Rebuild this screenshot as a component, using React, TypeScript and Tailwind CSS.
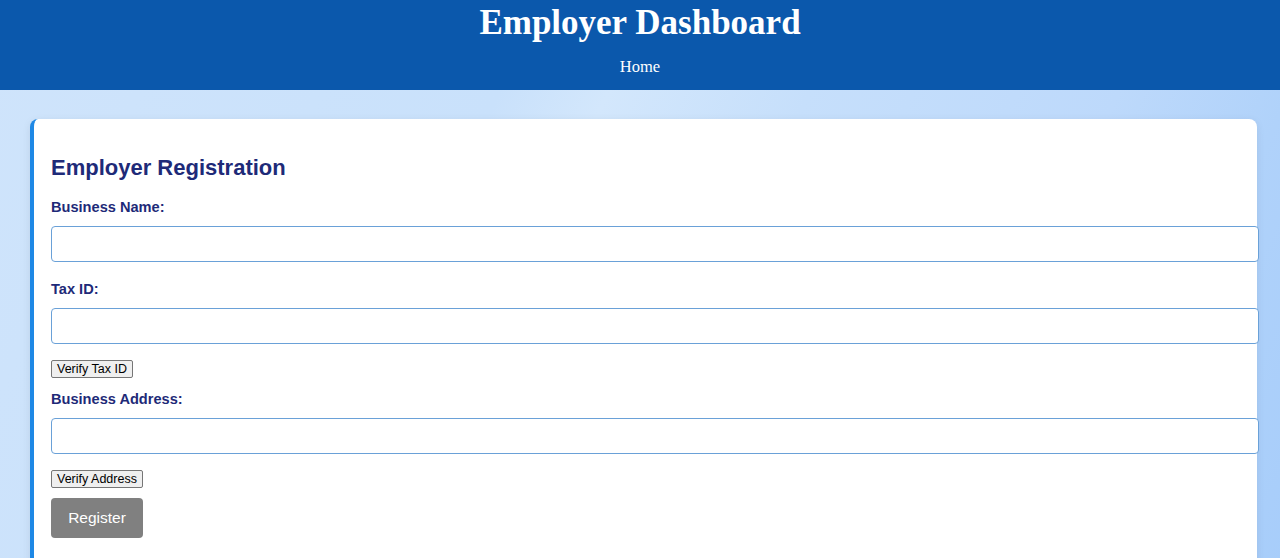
export default function App() {
  const fields = [
    { label: "Business Name:", verify: null, gap: "mt-[17px]" },
    { label: "Tax ID:", verify: "Verify Tax ID", gap: "mt-[18px]" },
    { label: "Business Address:", verify: "Verify Address", gap: "mt-[12px]" },
  ];

  return (
    <div className="min-h-[558px] overflow-hidden bg-[linear-gradient(115deg,#cfe4fb_0%,#c9e1fb_35%,#d3e7fc_42%,#c6dffb_55%,#bdd9fb_75%,#b0d2fa_86%,#a7cdfa_100%)] font-['Liberation_Sans',Arial,sans-serif]">
      <header className="h-[90px] bg-[#0b58ac] text-center text-white">
        <h1 className="pt-[3px] font-['Liberation_Serif',Georgia,serif] text-[35px] font-bold leading-[40px]">
          Employer Dashboard
        </h1>
        <nav className="mt-[14px] font-['Liberation_Serif',Georgia,serif] text-[16.5px] leading-[20px]">
          <a href="#">Home</a>
        </nav>
      </header>

      <main className="px-[30px] pt-[29px]">
        <div className="w-[1227px] rounded-lg border-l-4 border-[#1e88e5] bg-white pb-[40px] pl-[17px] pr-[18px] pt-[36px] shadow-[0_2px_8px_rgba(0,0,0,0.08)]">
          <h2 className="text-[22px] font-bold leading-[26px] text-[#1e2a78]">Employer Registration</h2>

          {fields.map((f, i) => (
            <div key={i} className={f.gap}>
              <label className="block text-[14.6px] font-bold leading-[18px] text-[#1e2a78]">{f.label}</label>
              <input
                type="text"
                className="mt-[10px] block h-[36px] w-[1208px] rounded-[4px] border border-[#6aa1d8] bg-white px-2 text-[14px]"
              />
              {f.verify && (
                <button className="mt-[16px] block h-[18px] rounded-[2px] border border-[#767676] bg-[#efefef] px-[5px] text-[12.5px] leading-[16px] text-black">
                  {f.verify}
                </button>
              )}
            </div>
          ))}

          <button className="mt-[10px] h-[40px] w-[92px] rounded-[4px] bg-[#808080] text-[15.5px] text-white">
            Register
          </button>
        </div>
      </main>
    </div>
  );
}
